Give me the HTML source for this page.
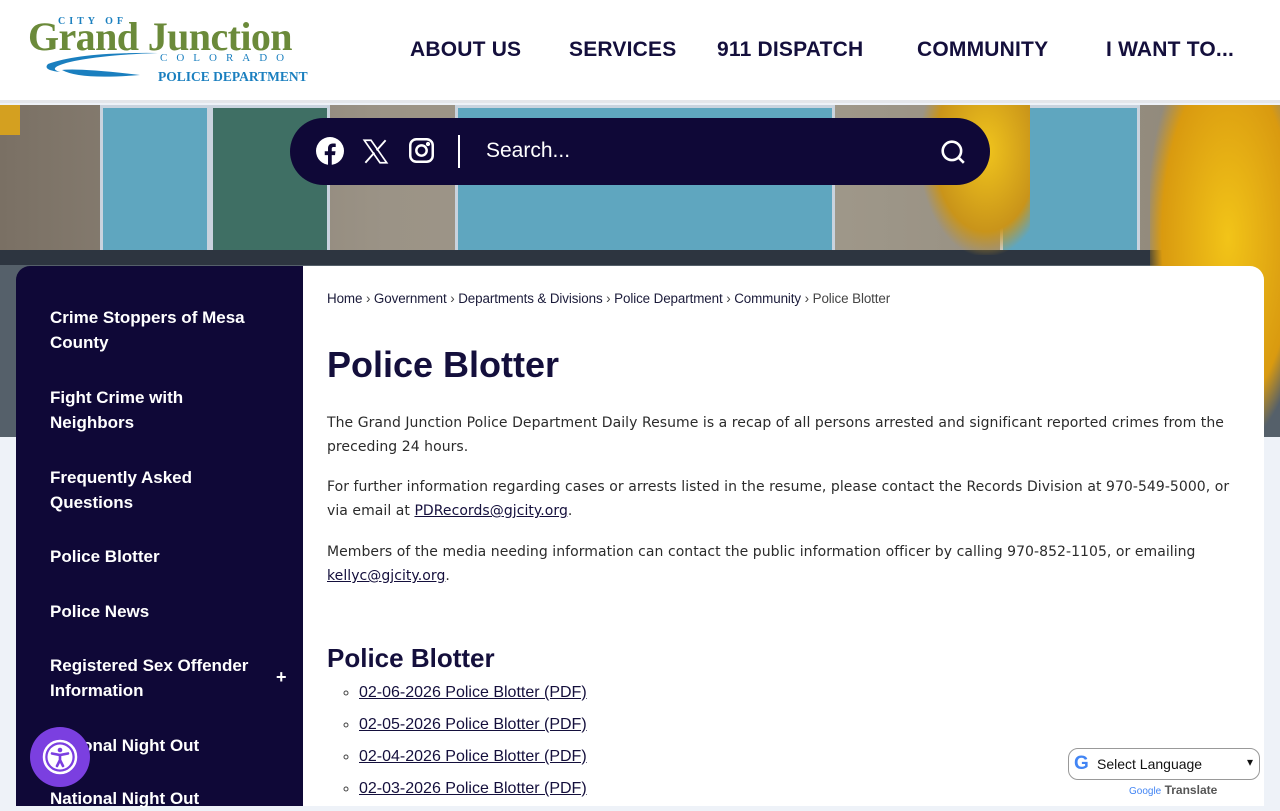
<!DOCTYPE html>
<html><head><meta charset="utf-8">
<style>
*{margin:0;padding:0;box-sizing:border-box}
body{width:1280px;height:800px;overflow:hidden;background:#eef2f8;font-family:"Liberation Sans",sans-serif;position:relative}
header{position:absolute;left:0;top:0;width:1280px;height:103px;background:#fff;border-bottom:3px solid #e4e6ea;z-index:3}
.nav{position:absolute;top:38px;font-weight:bold;font-size:21px;color:#140f3c;letter-spacing:0.2px}
.hero{position:absolute;left:0;top:105px;width:1280px;height:332px;background:#8f877c;overflow:hidden}
.hero div{position:absolute}
.win{background:#5fa6bf;border:3px solid #c9d3de}
.search{position:absolute;left:290px;top:118px;width:700px;height:67px;background:#0f0837;border-radius:34px;z-index:2}
.side{position:absolute;left:16px;top:266px;width:287px;height:540px;background:#0f0837;border-top-left-radius:14px;z-index:2}
.side a{position:absolute;left:34px;color:#fff;font-weight:bold;font-size:17px;line-height:25px;text-decoration:none}
.main{position:absolute;left:303px;top:266px;width:961px;height:540px;background:#fff;border-top-right-radius:14px;z-index:2;color:#222}
.bc{position:absolute;left:24px;top:25px;font-size:13.4px;color:#1b1b3a;letter-spacing:-0.1px}
.bc span{color:#444}
h1{position:absolute;left:24px;top:78px;font-size:36px;color:#140f3c}
.p{position:absolute;left:24px;width:920px;font-family:"DejaVu Sans",sans-serif;font-size:14px;line-height:24px;color:#2b2b2b;letter-spacing:0.05px}
.p a{color:#140f3c}
h2{position:absolute;left:24px;top:377px;font-size:26px;color:#140f3c}
ul{position:absolute;left:56px;top:415px;list-style:circle;font-size:16px}
ul li{height:32px;line-height:24px;color:#444}
ul a{color:#140f3c}
</style></head><body>
<header>
 <div style="position:absolute;left:58px;top:16px;font-family:'Liberation Serif',serif;font-size:10px;font-weight:bold;color:#1a7fbf;letter-spacing:4px">CITY OF</div>
 <div style="position:absolute;left:28px;top:13px;font-family:'Liberation Serif',serif;font-weight:bold;font-size:40px;color:#6b8a3a;letter-spacing:-0.6px">Grand Junction</div>
 <svg style="position:absolute;left:40px;top:50px" width="120" height="30"><path d="M118 3 Q40 2 8 14 Q2 20 20 22 Q6 18 30 12 Q60 5 118 3Z M100 25 Q40 30 22 20 Q40 18 100 25Z" fill="#1a7fbf"/></svg>
 <div style="position:absolute;left:160px;top:52px;font-family:'Liberation Serif',serif;font-size:11px;color:#1a7fbf;letter-spacing:9px">COLORADO</div>
 <div style="position:absolute;left:158px;top:69px;font-family:'Liberation Serif',serif;font-weight:bold;font-size:13.5px;color:#1a7fbf">POLICE DEPARTMENT</div>
 <div class="nav" style="left:410px">ABOUT US</div>
 <div class="nav" style="left:569px">SERVICES</div>
 <div class="nav" style="left:717px">911 DISPATCH</div>
 <div class="nav" style="left:917px">COMMUNITY</div>
 <div class="nav" style="left:1106px">I WANT TO...</div>
</header>
<div class="hero">
 <div style="left:0;top:0;width:1280px;height:332px;background:linear-gradient(90deg,#7a7064,#9b9386 30%,#a19a8c 60%,#8e8678)"></div>
 <div class="win" style="left:100px;top:0;width:110px;height:150px"></div>
 <div class="win" style="left:210px;top:0;width:120px;height:150px;background:#3f6f64"></div>
 <div class="win" style="left:455px;top:0;width:380px;height:148px"></div>
 <div class="win" style="left:1000px;top:0;width:140px;height:148px"></div>
 <div style="left:0;top:145px;width:1280px;height:15px;background:#2d3540"></div>
 <div style="left:0;top:160px;width:1280px;height:172px;background:#55606a"></div>
 <div style="left:1150px;top:0;width:130px;height:332px;background:radial-gradient(ellipse at 60% 40%,#f2c418,#d99a10 60%,transparent 75%)"></div>
 <div style="left:920px;top:0;width:110px;height:150px;background:radial-gradient(ellipse at 60% 30%,#f0c41c,#c9941a 55%,transparent 72%)"></div>
 <div style="left:0;top:0;width:20px;height:30px;background:#d4a020"></div>
</div>
<div class="search">
 <svg style="position:absolute;left:26px;top:19px" width="28" height="28" viewBox="0 0 24 24"><circle cx="12" cy="12" r="12" fill="#fff"/><path d="M13.5 24v-8.5h2.8l.4-3.3h-3.2v-2c0-1 .3-1.6 1.7-1.6h1.7V5.7c-.3 0-1.3-.1-2.5-.1-2.5 0-4.1 1.5-4.1 4.2v2.4H7.5v3.3h2.8V24z" fill="#0f0837"/></svg>
 <svg style="position:absolute;left:72px;top:20px" width="27" height="27" viewBox="0 0 24 24"><path d="M2 2h6l14 20h-6z" fill="none" stroke="#fff" stroke-width="1.5"/><path d="M21 2l-8 9M3 22l8-9" stroke="#fff" stroke-width="1.7"/></svg>
 <svg style="position:absolute;left:118px;top:19px" width="27" height="27" viewBox="0 0 24 24" fill="none" stroke="#fff" stroke-width="2.2"><rect x="2" y="2" width="20" height="20" rx="5.5"/><circle cx="12" cy="12" r="4.6"/><circle cx="17.8" cy="6.2" r=".8" fill="#fff"/></svg>
 <div style="position:absolute;left:168px;top:17px;width:2px;height:33px;background:#fff"></div>
 <div style="position:absolute;left:196px;top:21px;color:#fff;font-size:21px">Search...</div>
 <svg style="position:absolute;left:650px;top:21px" width="26" height="26" viewBox="0 0 24 24" fill="none" stroke="#fff" stroke-width="2.4"><circle cx="11" cy="11" r="8.5"/><path d="M17 17l5 5"/></svg>
</div>
<div class="side">
 <a style="top:39px">Crime Stoppers of Mesa<br>County</a>
 <a style="top:119px">Fight Crime with<br>Neighbors</a>
 <a style="top:199px">Frequently Asked<br>Questions</a>
 <a style="top:278px">Police Blotter</a>
 <a style="top:333px">Police News</a>
 <a style="top:387px">Registered Sex Offender<br>Information</a>
 <a style="left:260px;top:399px;font-size:18px">+</a>
 <a style="top:467px">National Night Out</a>
 <a style="top:520px">National Night Out</a>
</div>
<div style="position:absolute;left:30px;top:727px;width:60px;height:60px;border-radius:50%;background:#7b3fe0;z-index:4">
 <svg style="position:absolute;left:12px;top:12px" width="36" height="36" viewBox="0 0 36 36"><circle cx="18" cy="18" r="16" fill="none" stroke="#fff" stroke-width="2.5"/><circle cx="18" cy="18" r="12.5" fill="#fff"/><circle cx="18" cy="11" r="2.3" fill="#7b3fe0"/><path d="M10 14.5l8 1.5 8-1.5M18 16v5l-3 6M18 21l3 6" stroke="#7b3fe0" stroke-width="2.6" fill="none" stroke-linecap="round"/></svg>
</div>
<div class="main">
 <div class="bc">Home <span>›</span> Government <span>›</span> Departments &amp; Divisions <span>›</span> Police Department <span>›</span> Community <span>›</span> <span>Police Blotter</span></div>
 <h1>Police Blotter</h1>
 <div class="p" style="top:145px">The Grand Junction Police Department Daily Resume is a recap of all persons arrested and significant reported crimes from the preceding 24 hours.</div>
 <div class="p" style="top:209px">For further information regarding cases or arrests listed in the resume, please contact the Records Division at 970-549-5000, or via email at <a href="#">PDRecords@gjcity.org</a>.</div>
 <div class="p" style="top:274px">Members of the media needing information can contact the public information officer by calling 970-852-1105, or emailing <a href="#">kellyc@gjcity.org</a>.</div>
 <h2>Police Blotter</h2>
 <ul>
  <li><a href="#">02-06-2026 Police Blotter (PDF)</a></li>
  <li><a href="#">02-05-2026 Police Blotter (PDF)</a></li>
  <li><a href="#">02-04-2026 Police Blotter (PDF)</a></li>
  <li><a href="#">02-03-2026 Police Blotter (PDF)</a></li>
 </ul>
</div>
<div style="position:absolute;left:1068px;top:748px;width:192px;height:32px;border:1px solid #999;border-radius:10px;background:#fff;z-index:4;font-size:14px;color:#111">
 <span style="position:absolute;left:5px;top:4px;font-weight:bold;font-size:19px;color:#4285f4">G</span>
 <span style="position:absolute;left:28px;top:7px">Select Language</span>
 <span style="position:absolute;right:6px;top:6px;font-size:12px">▾</span>
</div>
<div style="position:absolute;left:1129px;top:783px;font-size:12px;z-index:4;color:#555"><span style="font-size:10px;color:#4285f4">Google</span> <b>Translate</b></div>
</body></html>
